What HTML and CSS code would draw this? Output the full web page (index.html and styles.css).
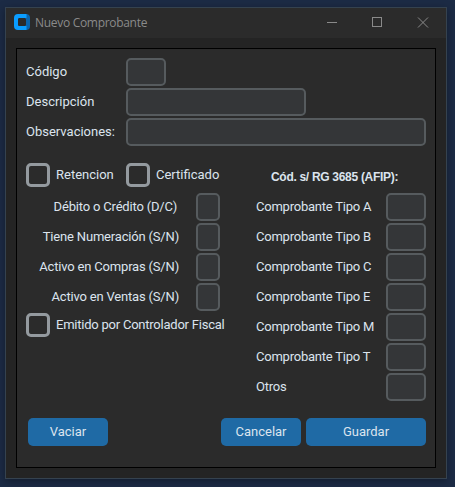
FILE: index.html
```
<!DOCTYPE html>
<html lang="es">
<head>
<meta charset="utf-8">
<title>Nuevo Comprobante</title>
<link rel="stylesheet" href="styles.css">
</head>
<body>
<div class="window">
  <header class="titlebar">
    <svg class="logo" width="16" height="16" viewBox="0 0 16 16">
      <path fill="#0a64ad" d="M11 0h1a4 4 0 0 1 4 4v8a4 4 0 0 1-4 4h-1z"/>
      <path fill="#0a9dff" d="M4 0h8.500v4H6a2 2 0 0 0-2 2v4a2 2 0 0 0 2 2h6.500v4H4a4 4 0 0 1-4-4V4a4 4 0 0 1 4-4z"/>
      <rect x="4" y="4" width="8" height="8" rx="1.500" fill="#2b2b2b"/>
    </svg>
    <h1 class="title">Nuevo Comprobante</h1>
    <svg class="controls" width="102" height="12" viewBox="0 0 102 12" fill="none" stroke="#8a8a8a">
      <path d="M0 5.500h10"/>
      <rect x="45.500" y="0.500" width="9" height="9"/>
      <path d="M91 .5l10 10M101 .5L91 10.500"/>
    </svg>
  </header>
  <main class="frame">
    <div class="row"><label class="label">Código</label><span class="entry code"></span></div>
    <div class="row"><label class="label">Descripción</label><span class="entry desc"></span></div>
    <div class="row"><label class="label">Observaciones:</label><span class="entry obs"></span></div>
    <div class="columns">
      <section class="left">
        <div class="checks">
          <label class="check"><span class="box"></span><span>Retencion</span></label>
          <label class="check"><span class="box"></span><span>Certificado</span></label>
        </div>
        <div class="flag"><label class="t1">Débito o Crédito (D/C)</label><span class="entry tiny"></span></div>
        <div class="flag"><label>Tiene Numeración (S/N)</label><span class="entry tiny"></span></div>
        <div class="flag"><label>Activo en Compras (S/N)</label><span class="entry tiny"></span></div>
        <div class="flag"><label>Activo en Ventas (S/N)</label><span class="entry tiny"></span></div>
        <label class="check"><span class="box"></span><span class="fiscal">Emitido por Controlador Fiscal</span></label>
      </section>
      <section class="right">
        <h2 class="heading">Cód. s/ RG 3685 (AFIP):</h2>
        <div class="type"><label>Comprobante Tipo A</label><span class="entry code"></span></div>
        <div class="type"><label>Comprobante Tipo B</label><span class="entry code"></span></div>
        <div class="type"><label>Comprobante Tipo C</label><span class="entry code"></span></div>
        <div class="type"><label>Comprobante Tipo E</label><span class="entry code"></span></div>
        <div class="type"><label>Comprobante Tipo M</label><span class="entry code"></span></div>
        <div class="type"><label>Comprobante Tipo T</label><span class="entry code"></span></div>
        <div class="type"><label>Otros</label><span class="entry code"></span></div>
      </section>
    </div>
    <footer class="actions">
      <button class="button">Vaciar</button>
      <button class="button cancel">Cancelar</button>
      <button class="button save">Guardar</button>
    </footer>
  </main>
</div>
</body>
</html>
```
FILE: styles.css
```
* { box-sizing: border-box; }
body {
  margin: 0;
  height: 487px;
  padding: 7px 8px 8px 5px;
  background: #1c2b45;
  font: 13px/28px Roboto, "Liberation Sans", sans-serif;
  color: #dce4ee;
  white-space: nowrap;
  overflow: hidden;
}
.window {
  width: 442px;
  height: 472px;
  border: 1px solid #35424f;
  background: #242424;
  box-shadow: 0 2px 8px rgba(0, 0, 0, .35);
}
.titlebar {
  display: flex;
  align-items: center;
  height: 30px;
  padding: 0 17px 0 8px;
  background: #2b2b2b;
}
.logo { margin-bottom: 2px; }
.title {
  margin: 0 auto 0 5px;
  font: 12px/28px "Open Sans", "Noto Sans", sans-serif;
  letter-spacing: -.3px;
  color: #8a8a8a;
}
.frame {
  height: 420px;
  margin: 10px;
  padding: 9px;
  border: 1px solid #000;
  background: #2b2b2b;
}
.row { display: flex; height: 28px; margin-bottom: 2px; }
.label { width: 100px; }
.entry {
  height: 28px;
  flex: none;
  border: 2px solid #565b5e;
  border-radius: 5px;
  background: #343638;
}
.code { width: 40px; }
.desc { width: 180px; }
.obs { width: 300px; }
.tiny { width: 24px; }
.columns { display: flex; justify-content: space-between; padding-top: 15px; }
.left { width: 200px; }
.right { width: 170px; }
.checks { display: flex; margin-bottom: 6px; }
.check { display: flex; align-items: center; gap: 6px; width: 100px; height: 24px; line-height: 24px; }
.box {
  flex: none;
  width: 24px;
  height: 24px;
  border: 3px solid #949a9f;
  border-radius: 5px;
}
.fiscal, .type { letter-spacing: -.23px; }
.flag {
  display: flex;
  justify-content: flex-end;
  width: 194px;
  height: 28px;
  margin-bottom: 2px;
  letter-spacing: -.18px;
}
.flag label { margin-right: 17px; }
.flag .t1 { margin-right: 19px; }
.heading {
  margin: 0 0 2px;
  padding-left: 15px;
  font: bold 12px/28px "Liberation Sans", sans-serif;
  letter-spacing: -.3px;
}
.type { display: flex; justify-content: space-between; height: 28px; margin-bottom: 2px; }
.actions { display: flex; margin-top: 15px; padding-left: 2px; }
.button {
  width: 80px;
  height: 28px;
  padding: 0;
  border: 0;
  border-radius: 5px;
  background: #1f6aa5;
  color: #dce4ee;
  font: inherit;
}
.cancel { margin-left: auto; }
.save { width: 120px; margin-left: 5px; }
```
